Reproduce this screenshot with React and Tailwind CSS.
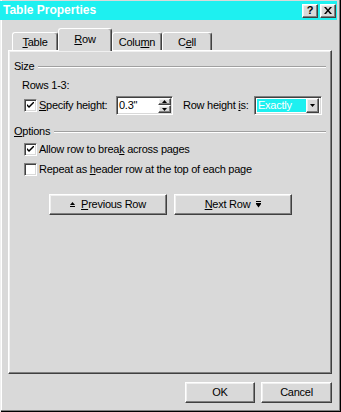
const raised =
  "border border-t-white border-l-white border-r-[#404040] border-b-[#404040] shadow-[inset_-1px_-1px_#808080,inset_1px_1px_#f0f0f0]";
const sunken =
  "border border-t-[#808080] border-l-[#808080] border-r-white border-b-white shadow-[inset_1px_1px_#404040,inset_-1px_-1px_#d9d9d9]";

const CheckBox = ({ checked }) => (
  <div className={`w-[13px] h-[13px] bg-white shrink-0 flex items-center justify-center ${sunken}`}>
    {checked && (
      <svg width="7" height="7" viewBox="0 0 7 7">
        <path d="M0 2 L0 4 L2 6 L7 1 L7 -1 L2 4 Z" fill="#000" />
      </svg>
    )}
  </div>
);

const Etched = () => (
  <div className="flex-1 h-[2px] border-t border-t-[#a0a0a0] border-b border-b-white" />
);

const Tab = ({ children, selected, w }) => (
  <div
    className={`${w} flex items-center justify-center bg-[#d9d9d9] border-t border-l border-t-white border-l-white border-r border-r-[#404040] rounded-t-[3px] shadow-[inset_-1px_0_#808080] ${
      selected ? "h-[23px] relative z-10 -mb-[1px] pb-[2px]" : "h-[18px] pt-[2px]"
    }`}
  >
    {children}
  </div>
);

const UpIcon = () => (
  <svg width="5" height="6" viewBox="0 0 5 6">
    <path d="M2.5 0 L5 3 L0 3 Z" fill="#000" />
    <rect x="0" y="4" width="5" height="1" fill="#000" />
  </svg>
);

const DownIcon = () => (
  <svg width="5" height="7" viewBox="0 0 5 7">
    <rect x="0" y="0" width="5" height="1" fill="#000" />
    <rect x="0" y="2" width="5" height="1" fill="#000" />
    <path d="M0 3 L5 3 L2.5 6.5 Z" fill="#000" />
  </svg>
);

const Button = ({ children, w }) => (
  <div className={`${w} h-[21px] flex items-center justify-center gap-[6px] bg-[#d9d9d9] ${raised}`}>
    {children}
  </div>
);

export default function App() {
  return (
    <div
      className="w-[341px] h-[412px] bg-[#d9d9d9] flex flex-col text-[11px] leading-[13px] tracking-[-0.25px] whitespace-nowrap text-black shadow-[inset_1px_0_#f0f0f0,inset_-1px_-1px_#000,inset_-2px_-2px_#808080,inset_2px_0_#fff]"
      style={{ fontFamily: '"Liberation Sans", Arial, sans-serif' }}
    >
      {/* title bar */}
      <div className="mt-[1px] mr-[4px] h-[19px] bg-[#1ef0f0] flex items-center justify-between pl-[3px] pr-[1px]">
        <span className="text-white font-bold text-[12px] tracking-normal">Table Properties</span>
        <div className="flex">
          <div className={`w-[16px] h-[14px] bg-[#d9d9d9] flex items-center justify-center font-bold text-[11px] ${raised}`}>?</div>
          <div className={`ml-[2px] w-[16px] h-[14px] bg-[#d9d9d9] flex items-center justify-center ${raised}`}>
            <svg width="8" height="7" viewBox="0 0 8 7">
              <path d="M0 0 L2 0 L4 2.5 L6 0 L8 0 L5 3.5 L8 7 L6 7 L4 4.5 L2 7 L0 7 L3 3.5 Z" fill="#000" />
            </svg>
          </div>
        </div>
      </div>

      {/* tabs */}
      <div className="mt-[8px] ml-[12px] h-[22px] flex items-end">
        <Tab w="w-[46px]"><span><u>T</u>able</span></Tab>
        <Tab w="w-[54px]" selected><span><u>R</u>ow</span></Tab>
        <Tab w="w-[50px]"><span>Colu<u>m</u>n</span></Tab>
        <Tab w="w-[50px]"><span>C<u>e</u>ll</span></Tab>
      </div>

      {/* panel */}
      <div className={`ml-[8px] w-[324px] h-[324px] flex flex-col px-[5px] pt-[9px] ${raised}`}>
        <div className="h-[13px] flex items-center gap-[4px]">
          <span>Size</span>
          <Etched />
        </div>
        <div className="mt-[6px] ml-[8px] h-[13px]">Rows 1-3:</div>
        <div className="mt-[4px] ml-[10px] h-[19px] flex items-center">
          <CheckBox checked />
          <span className="ml-[2px] w-[77px] shrink-0"><u>S</u>pecify height:</span>
          <div className={`w-[57px] h-[19px] shrink-0 bg-white flex items-center justify-between pl-[2px] pr-[1px] ${sunken}`}>
            <span>0.3"</span>
            <div className="flex flex-col">
              <div className={`w-[13px] h-[7px] bg-[#d9d9d9] flex items-center justify-center ${raised}`}>
                <svg width="5" height="3" viewBox="0 0 5 3"><path d="M2.5 0 L5 3 L0 3 Z" fill="#000" /></svg>
              </div>
              <div className={`w-[13px] h-[8px] bg-[#d9d9d9] flex items-center justify-center ${raised}`}>
                <svg width="5" height="3" viewBox="0 0 5 3"><path d="M0 0 L5 0 L2.5 3 Z" fill="#000" /></svg>
              </div>
            </div>
          </div>
          <span className="ml-[10px] w-[71px] shrink-0">Row height <u>i</u>s:</span>
          <div className={`w-[68px] h-[19px] shrink-0 bg-white flex items-center p-[2px] ${sunken}`}>
            <div className="flex-1 h-full bg-[#1ef0f0] text-white flex items-center pl-[1px]">Exactly</div>
            <div className={`w-[13px] h-[15px] bg-[#d9d9d9] flex items-center justify-center ${raised}`}>
              <svg width="5" height="3" viewBox="0 0 5 3"><path d="M0 0 L5 0 L2.5 3 Z" fill="#000" /></svg>
            </div>
          </div>
        </div>

        <div className="mt-[10px] h-[13px] flex items-center gap-[4px]">
          <span><u>O</u>ptions</span>
          <Etched />
        </div>
        <div className="mt-[5px] ml-[10px] h-[13px] flex items-center">
          <CheckBox checked />
          <span className="ml-[2px]">Allow row to brea<u>k</u> across pages</span>
        </div>
        <div className="mt-[7px] ml-[10px] h-[13px] flex items-center">
          <CheckBox />
          <span className="ml-[2px]">Repeat as <u>h</u>eader row at the top of each page</span>
        </div>

        <div className="mt-[18px] ml-[35px] flex gap-[7px]">
          <Button w="w-[118px]">
            <UpIcon />
            <span><u>P</u>revious Row</span>
          </Button>
          <Button w="w-[118px]">
            <span><u>N</u>ext Row</span>
            <DownIcon />
          </Button>
        </div>
      </div>

      {/* bottom buttons */}
      <div className="mt-[8px] ml-[185px] flex gap-[6px]">
        <Button w="w-[70px]">OK</Button>
        <Button w="w-[71px]">Cancel</Button>
      </div>
    </div>
  );
}
